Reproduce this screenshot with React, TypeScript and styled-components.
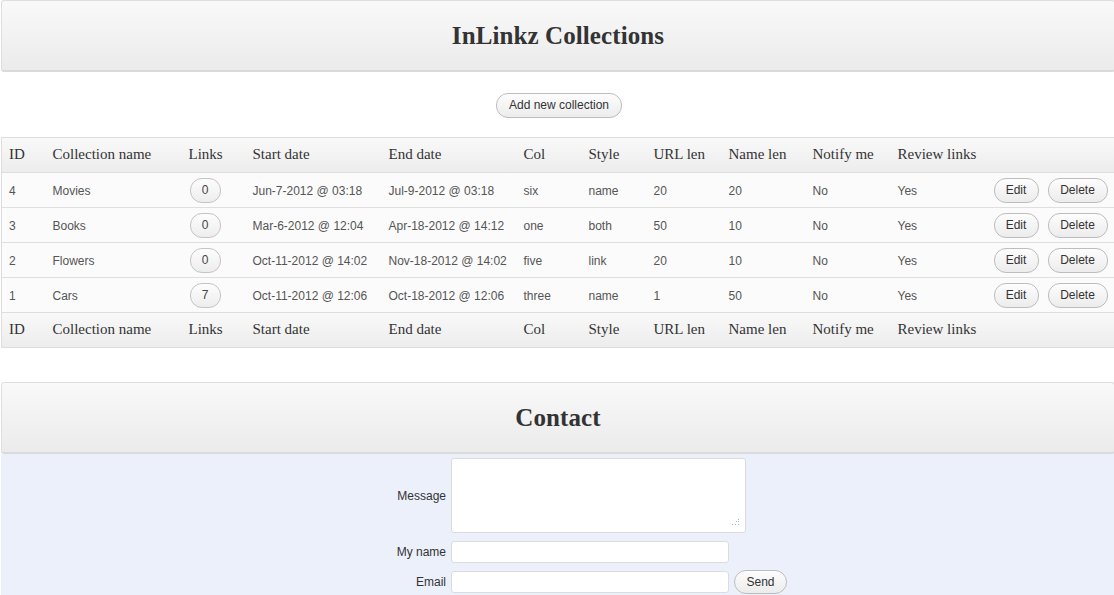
import React from "react";
import styled, { createGlobalStyle } from "styled-components";

const Global = createGlobalStyle`
  html, body { margin: 0; padding: 0; background: #fff; overflow: hidden; }
  body { font-family: "Liberation Sans", Arial, sans-serif; font-size: 12px; color: #444; }
`;

const Page = styled.div`
  width: 1114px;
  margin-left: 1px;
  display: flex;
  flex-direction: column;
`;

const Panel = styled.div`
  height: 69px;
  border: 1px solid #dedede;
  border-bottom: 2px solid #dadada;
  border-radius: 3px;
  background: linear-gradient(#f9f9f9, #ebebeb);
  display: flex;
  align-items: center;
  justify-content: center;
`;

const Title = styled.h1`
  margin: 0;
  font-family: "Liberation Serif", "Times New Roman", serif;
  font-weight: bold;
  font-size: 25px;
  color: #333;
  letter-spacing: 0.1px;
`;

const AddRow = styled.div`
  display: flex;
  justify-content: center;
  padding: 21px 0 19px 2px;
`;

const PillButton = styled.button<{ $w?: number; $h?: number }>`
  height: ${(p) => p.$h ?? 25}px;
  padding: 0 11px;
  ${(p) => (p.$w ? `width: ${p.$w}px; padding: 0;` : "")}
  border: 1px solid #bdbdbd;
  border-radius: 12px;
  background: linear-gradient(#fdfdfd, #ececec);
  font-family: "Liberation Sans", Arial, sans-serif;
  font-size: 12px;
  color: #333;
  line-height: ${(p) => (p.$h ?? 25) - 2}px;
  cursor: pointer;
`;

const Table = styled.table`
  width: 1114px;
  border-collapse: collapse;
  table-layout: fixed;
  border: 1px solid #dddddd;
`;

const HeadRow = styled.tr`
  height: 35px;
  background: linear-gradient(#f9f9f9, #ececec);
`;

const Th = styled.th`
  text-align: left;
  padding: 0 0 2px 7px;
  font-family: "Liberation Serif", "Times New Roman", serif;
  font-weight: normal;
  font-size: 15px;
  color: #333;
  white-space: nowrap;
  border-bottom: 1px solid #dddddd;
  border-top: 1px solid #dddddd;
`;

const BodyRow = styled.tr`
  height: 35px;
  background: #fbfbfb;
  border-bottom: 1px solid #dfdfdf;
`;

const Td = styled.td`
  padding: 1px 0 0 7px;
  font-size: 12px;
  color: #555;
  white-space: nowrap;
  vertical-align: middle;
`;

const Badge = styled.span`
  display: inline-flex;
  align-items: center;
  justify-content: center;
  width: 31px;
  height: 25px;
  margin: -1px 0 0 1px;
  box-sizing: border-box;
  border: 1px solid #c4c4c4;
  border-radius: 12px;
  background: linear-gradient(#fdfdfd, #ededed);
  color: #444;
  font-size: 12px;
`;

const Actions = styled.div`
  display: flex;
  gap: 9px;
  margin-top: -1px;
`;

const Spacer = styled.div`
  height: 34px;
`;

const ContactBody = styled.div`
  background: #ecf0fb;
  padding: 4px 0 2px;
`;

const Form = styled.div`
  display: grid;
  grid-template-columns: 445px 278px auto;
  column-gap: 5px;
  row-gap: 7px;
  align-items: center;
`;

const Label = styled.label`
  grid-column: 1;
  text-align: right;
  font-size: 12px;
  color: #333;
`;

const TextArea = styled.div`
  grid-column: 2 / span 2;
  width: 295px;
  height: 75px;
  margin-bottom: 1px;
  box-sizing: border-box;
  background: #fff;
  border: 1px solid #dcdcdc;
  border-radius: 3px;
  position: relative;
`;

const Grip = styled.svg`
  position: absolute;
  right: 5px;
  bottom: 5px;
`;

const Input = styled.div`
  grid-column: 2;
  height: 22px;
  box-sizing: border-box;
  background: #fff;
  border: 1px solid #dcdcdc;
  border-radius: 3px;
`;

const SendCell = styled.div`
  grid-column: 3;
  display: flex;
`;

const cols = [44, 136, 64, 136, 135, 65, 65, 75, 84, 85, 96, 129];
const heads = [
  "ID",
  "Collection name",
  "Links",
  "Start date",
  "End date",
  "Col",
  "Style",
  "URL len",
  "Name len",
  "Notify me",
  "Review links",
  "",
];

const rows = [
  ["4", "Movies", "0", "Jun-7-2012 @ 03:18", "Jul-9-2012 @ 03:18", "six", "name", "20", "20", "No", "Yes"],
  ["3", "Books", "0", "Mar-6-2012 @ 12:04", "Apr-18-2012 @ 14:12", "one", "both", "50", "10", "No", "Yes"],
  ["2", "Flowers", "0", "Oct-11-2012 @ 14:02", "Nov-18-2012 @ 14:02", "five", "link", "20", "10", "No", "Yes"],
  ["1", "Cars", "7", "Oct-11-2012 @ 12:06", "Oct-18-2012 @ 12:06", "three", "name", "1", "50", "No", "Yes"],
];

const Head = () => (
  <HeadRow>
    {heads.map((h, i) => (
      <Th key={i}>{h}</Th>
    ))}
  </HeadRow>
);

export default function App() {
  return (
    <>
      <Global />
      <Page>
        <Panel>
          <Title>InLinkz Collections</Title>
        </Panel>
        <AddRow>
          <PillButton $w={126}>Add new collection</PillButton>
        </AddRow>
        <Table>
          <colgroup>
            {cols.map((w, i) => (
              <col key={i} style={{ width: w }} />
            ))}
          </colgroup>
          <thead>
            <Head />
          </thead>
          <tbody>
            {rows.map((r) => (
              <BodyRow key={r[0]}>
                {r.map((c, i) => (
                  <Td key={i}>{i === 2 ? <Badge>{c}</Badge> : c}</Td>
                ))}
                <Td>
                  <Actions>
                    <PillButton $w={45}>Edit</PillButton>
                    <PillButton $w={60}>Delete</PillButton>
                  </Actions>
                </Td>
              </BodyRow>
            ))}
          </tbody>
          <tfoot>
            <Head />
          </tfoot>
        </Table>
        <Spacer />
        <Panel>
          <Title>Contact</Title>
        </Panel>
        <ContactBody>
          <Form>
            <Label>Message</Label>
            <TextArea>
              <Grip width="9" height="9" viewBox="0 0 9 9">
                <g fill="#b5b5b5">
                  <rect x="7" y="1" width="1" height="1" />
                  <rect x="5" y="3" width="1" height="1" />
                  <rect x="7" y="3" width="1" height="1" />
                  <rect x="1" y="6" width="1" height="1" />
                  <rect x="4" y="6" width="1" height="1" />
                  <rect x="7" y="6" width="1" height="1" />
                </g>
              </Grip>
            </TextArea>
            <Label>My name</Label>
            <Input />
            <Label>Email</Label>
            <Input />
            <SendCell>
              <PillButton $w={53} $h={24}>
                Send
              </PillButton>
            </SendCell>
          </Form>
        </ContactBody>
      </Page>
    </>
  );
}
